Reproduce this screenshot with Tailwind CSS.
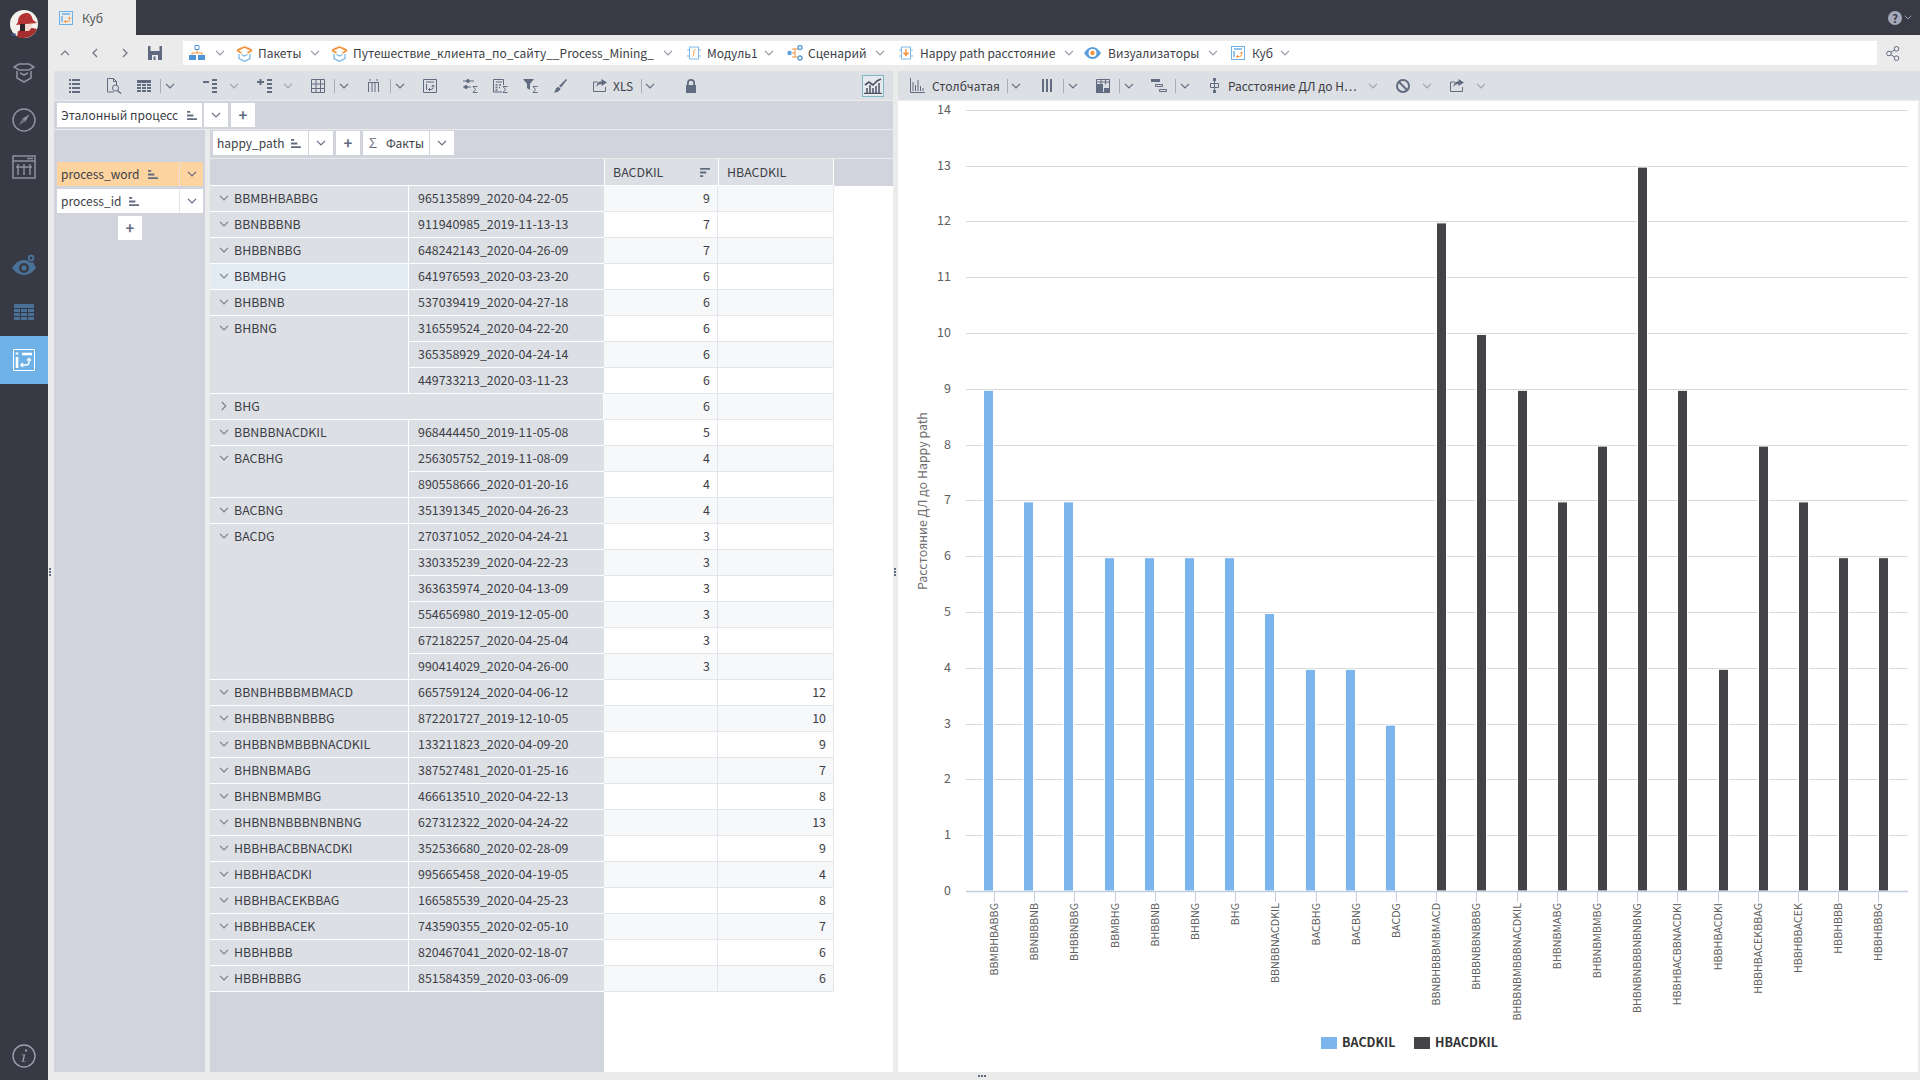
<!DOCTYPE html>
<html lang="ru">
<head>
    <meta charset="UTF-8">
    <title>Куб</title>
    <script src="https://cdn.jsdelivr.net/npm/@tailwindcss/browser@4"></script>
</head>
<body class="w-[1920px] h-[1080px] overflow-hidden flex bg-[#ebebeb] font-['Noto_Sans_CJK_SC',sans-serif] text-[12px] leading-[16px] text-[#3c3e46]">

    <!-- Icon set -->
    <svg class="hidden">
        <symbol id="chev" viewBox="0 0 10 6"><path d="M1 .8l4 4 4-4" fill="none" stroke="currentColor" stroke-width="1.200"/></symbol>
        <symbol id="sort" viewBox="0 0 11 10"><path d="M0 0h3.500v2H0zM0 4h7v2H0zM0 8h11v2H0z" fill="currentColor"/></symbol>
        <symbol id="pkg" viewBox="0 0 17 17"><path d="M1 5.500L8.500 2 16 5.500 11.500 3M1 5.500l4.500 2.500M16 5.500l-4.500 2.500M5.500 3L1 5.500" fill="none" stroke="#f5943c" stroke-width="1.600"/><path d="M3 9v4.500l5.500 2.800 5.500-2.800V9M5.500 9.500l3 1.500 3-1.500" fill="none" stroke="#7db8e8" stroke-width="1.300"/></symbol>
        <symbol id="cube" viewBox="0 0 14 14"><rect x=".5" y=".5" width="13" height="13" fill="none" stroke="#6fb1e7"/><path d="M3 3h8M3 5v6" stroke="#6fb1e7" stroke-width="1.500"/><path d="M10.500 6v2.500a2 2 0 0 1-2 2H5.500M9 7.500l1.500-1.500 1.500 1.500M7 9l-1.500 1.500L7 12" fill="none" stroke="#f5943c"/></symbol>
        <symbol id="export" viewBox="0 0 14 13"><path d="M.5 3v9.500h12V8M.5 3H5" fill="none" stroke="currentColor"/><path d="M8.500 0l5.500 3.500-5.500 3.500V5C6 5 4.500 6 3.500 8c0-3.500 2-5.500 5-5.500z" fill="currentColor"/></symbol>
        <symbol id="grid" viewBox="0 0 14 14"><path d="M.5.500h13v13H.5zM5 .5v13M9.500.5v13M.5 5h13M.5 9.500h13" fill="none" stroke="currentColor"/></symbol>
    </svg>

    <!-- Left navigation rail -->
    <aside class="w-[48px] h-full shrink-0 flex flex-col items-center bg-[#373a44]">
        <svg class="mt-[10px] w-[28px] h-[28px]" viewBox="0 0 28 28">
            <circle cx="14" cy="14" r="14" fill="#f4f1ee"/>
            <path d="M8 21l14-3 5 1a14 14 0 0 1-13 9c-3 0-5-.5-7-1z" fill="#a52f2f"/>
            <path d="M8 12C8 5 13 3 17 3c4 0 5 4 6 7l4 3-21 2z" fill="#b53232"/>
            <path d="M10 14h5v7h-5z" fill="#2e2528"/>
            <path d="M15 14h7c0 4-2 7-4 7h-3z" fill="#f3d9cd"/>
            <path d="M1 25l4-2 1 2-3 1z" fill="#3e5f8a"/>
        </svg>
        <svg class="mt-[23px] w-[22px] h-[22px] text-[#8c90a0]" viewBox="0 0 22 22" fill="none" stroke="currentColor" stroke-width="1.600"><path d="M1 6l5-3h10l5 3-5 3H6zM4 10v7l7 4 7-4v-7M7 12l4 2 4-2"/></svg>
        <svg class="mt-[25px] w-[24px] h-[24px] text-[#8c90a0]" viewBox="0 0 24 24"><circle cx="12" cy="12" r="11" fill="none" stroke="currentColor" stroke-width="1.500"/><path d="M17.500 6.500L13.500 13.500 10.500 10.500z" fill="currentColor"/><path d="M6.500 17.500L10.500 10.500 13.500 13.500z" fill="currentColor" opacity=".6"/></svg>
        <svg class="mt-[23px] w-[24px] h-[24px] text-[#8c90a0]" viewBox="0 0 24 24" fill="none" stroke="currentColor" stroke-width="1.500"><path d="M1 1h22v22H1zM1 6h22M6 9v11M12 9v11M18 9v11M4 12h16M15 3.500h6"/></svg>
        <svg class="mt-[74px] w-[24px] h-[24px] text-[#4a7198]" viewBox="0 0 24 24"><path d="M0 15c4-6 8-8 12-8 1 0 2 0 3 .5 2 1.500 4 2 6 1.500l3 6c-4 5-8 7-12 7S4 20 0 15z" fill="currentColor"/><circle cx="12" cy="15" r="5" fill="#373a44"/><circle cx="12" cy="15" r="2.500" fill="currentColor"/><circle cx="19" cy="5" r="4" fill="currentColor" stroke="#373a44"/><circle cx="19" cy="5" r="1.500" fill="#373a44"/></svg>
        <svg class="mt-[27px] w-[20px] h-[16px] text-[#4a7198]" viewBox="0 0 20 16" fill="currentColor"><path d="M0 0h20v4H0zM0 5h6v3H0zM7 5h6v3H7zM14 5h6v3h-6zM0 9h6v3H0zM7 9h6v3H7zM14 9h6v3h-6zM0 13h6v3H0zM7 13h6v3H7zM14 13h6v3h-6z"/></svg>
        <div class="mt-[16px] w-full h-[48px] flex items-center justify-center bg-[#6eb1e7]">
            <svg class="w-[22px] h-[22px] text-white" viewBox="0 0 22 22" fill="none" stroke="currentColor"><path d="M.5.500h21v21H.5z"/><path d="M9 5h10M4 3.500v2M4 8v11" stroke-width="2.600"/><path d="M16 10v3a3 3 0 0 1-3 3H8M14 11.500l2-2 2 2M10 14l-2 2 2 2" stroke-width="1.400"/></svg>
        </div>
        <svg class="mt-auto mb-[12px] w-[24px] h-[24px] text-[#9a9eae]" viewBox="0 0 24 24"><circle cx="12" cy="12" r="11" fill="none" stroke="currentColor" stroke-width="1.400"/><path d="M12.800 6.500a1.200 1.200 0 1 1 0 .1zM9.800 10.500h3.400l-1.500 6.500h1.500v.8H9.500v-.8h.8l1.300-5.700H9.800z" fill="currentColor"/></svg>
    </aside>

    <div class="flex-1 h-full flex flex-col relative">

        <!-- Window tabs -->
        <div class="h-[35px] flex items-stretch bg-[#383b45]">
            <div class="w-[88px] flex items-center bg-[#ebebeb]">
                <svg class="ml-[11px] w-[14px] h-[14px]"><use href="#cube"/></svg>
                <span class="ml-[9px] text-[#555]">Куб</span>
            </div>
            <div class="ml-auto mr-[8px] flex items-center text-[#a4a8ba]">
                <span class="w-[14px] h-[14px] rounded-full bg-[#a4a8ba] text-[#383b45] text-[11px] leading-[14px] font-bold text-center">?</span>
                <svg class="ml-[2px] w-[8px] h-[5px]"><use href="#chev"/></svg>
            </div>
        </div>

        <!-- Breadcrumbs -->
        <div class="h-[36px] flex items-center text-[#6d7280]">
            <svg class="ml-[12px] w-[10px] h-[6px] rotate-180"><use href="#chev"/></svg>
            <svg class="ml-[22px] w-[6px] h-[10px]" viewBox="0 0 6 10"><path d="M5 1L1 5l4 4" fill="none" stroke="currentColor" stroke-width="1.200"/></svg>
            <svg class="ml-[24px] w-[6px] h-[10px]" viewBox="0 0 6 10"><path d="M1 1l4 4-4 4" fill="none" stroke="currentColor" stroke-width="1.200"/></svg>
            <svg class="ml-[20px] w-[14px] h-[14px] text-[#5f6a80]" viewBox="0 0 14 14"><path d="M0 0h2.500v5h9V0H14v14H0zM4 9v5h6V9zM5.500 10.500h2V14h-2z" fill="currentColor" fill-rule="evenodd"/></svg>
            <div class="ml-[21px] w-[1694px] h-[24px] flex items-center bg-white text-[#9397a2]">
                <svg class="ml-[6px] w-[16px] h-[16px]" viewBox="0 0 16 16"><path d="M6 .5h4v4H6z" fill="none" stroke="#4d95d8"/><path d="M8 5v3M3 10V8h10v2" fill="none" stroke="#f5943c"/><path d="M0 10h7v5H0zM9 10h7v5H9z" fill="#4d95d8"/></svg>
                <svg class="ml-[10px] w-[10px] h-[6px]"><use href="#chev"/></svg>
                <svg class="ml-[11px] w-[17px] h-[17px]"><use href="#pkg"/></svg>
                <span class="ml-[5px] w-[43px] text-[#3c3e46] whitespace-nowrap">Пакеты</span>
                <svg class="ml-[9px] w-[10px] h-[6px]"><use href="#chev"/></svg>
                <svg class="ml-[11px] w-[17px] h-[17px]"><use href="#pkg"/></svg>
                <span class="ml-[5px] w-[302px] text-[#3c3e46] whitespace-nowrap">Путешествие_клиента_по_сайту__Process_Mining_</span>
                <svg class="ml-[8px] w-[10px] h-[6px]"><use href="#chev"/></svg>
                <svg class="ml-[14px] w-[14px] h-[14px]" viewBox="0 0 14 14"><path d="M2.500 1h9v12h-9zM0 4h2.500M0 10h2.500M11.500 4H14M11.500 10H14" fill="none" stroke="#7db8e8"/><path d="M8.500 3.500C7 3.500 7 5 6.800 7S6 10.500 5 10.500" fill="none" stroke="#f5943c"/></svg>
                <span class="ml-[6px] w-[50px] text-[#3c3e46] whitespace-nowrap">Модуль1</span>
                <svg class="ml-[7px] w-[10px] h-[6px]"><use href="#chev"/></svg>
                <svg class="ml-[13px] w-[16px] h-[16px]" viewBox="0 0 16 16"><path d="M5 4h6M8 4v8M5 8h3M5 12h6" fill="none" stroke="#f5943c"/><circle cx="2.500" cy="8" r="2.200" fill="#5a9edb"/><circle cx="13" cy="2.500" r="2" fill="none" stroke="#5a9edb" stroke-width="1.400"/><circle cx="13" cy="13" r="2" fill="none" stroke="#5a9edb" stroke-width="1.400"/></svg>
                <span class="ml-[5px] w-[59px] text-[#3c3e46] whitespace-nowrap">Сценарий</span>
                <svg class="ml-[8px] w-[10px] h-[6px]"><use href="#chev"/></svg>
                <svg class="ml-[14px] w-[14px] h-[14px]" viewBox="0 0 14 14"><path d="M2.500 1h9v12h-9zM0 4h2.500M0 10h2.500M11.500 4H14M11.500 10H14" fill="none" stroke="#7db8e8"/><path d="M7 3v6M4.500 6.500L7 9.500l2.500-3" fill="none" stroke="#f5943c" stroke-width="1.400"/></svg>
                <span class="ml-[7px] w-[136px] text-[#3c3e46] whitespace-nowrap">Happy path расстояние</span>
                <svg class="ml-[8px] w-[10px] h-[6px]"><use href="#chev"/></svg>
                <svg class="ml-[10px] w-[17px] h-[12px]" viewBox="0 0 17 12"><path d="M0 6c2.500-4 5.500-6 8.500-6S14.500 2 17 6c-2.500 4-5.500 6-8.500 6S2.500 10 0 6z" fill="#5a9edb"/><circle cx="8.500" cy="6" r="4" fill="#fff"/><circle cx="8.500" cy="6" r="2.200" fill="#f5943c"/></svg>
                <span class="ml-[7px] w-[92px] text-[#3c3e46] whitespace-nowrap">Визуализаторы</span>
                <svg class="ml-[8px] w-[10px] h-[6px]"><use href="#chev"/></svg>
                <svg class="ml-[13px] w-[14px] h-[14px]"><use href="#cube"/></svg>
                <span class="ml-[7px] w-[20px] text-[#3c3e46] whitespace-nowrap">Куб</span>
                <svg class="ml-[8px] w-[10px] h-[6px]"><use href="#chev"/></svg>
            </div>
            <svg class="ml-[9px] w-[14px] h-[15px] text-[#5f6a80]" viewBox="0 0 14 15" fill="none" stroke="currentColor"><circle cx="10.500" cy="2.800" r="2.300"/><circle cx="3" cy="7.500" r="2.300"/><circle cx="10.500" cy="12.200" r="2.300"/><path d="M8.500 4L5 6.300M5 8.700l3.500 2.300"/></svg>
        </div>

        <!-- Work area -->
        <div class="flex-1 flex pb-[8px]">

            <!-- Cube panel -->
            <section class="ml-[6px] w-[839px] flex flex-col">
                <div class="h-[29px] flex items-center bg-[#dcdfe4] text-[#626c80]">
                    <svg class="ml-[15px] w-[11px] h-[14px]" viewBox="0 0 11 14" fill="currentColor"><path d="M0 0h2v2H0zM3 0h8v2H3zM0 4h2v2H0zM3 4h8v2H3zM0 8h2v2H0zM3 8h8v2H3zM0 12h2v2H0zM3 12h8v2H3z"/></svg>
                    <svg class="ml-[27px] w-[15px] h-[16px]" viewBox="0 0 15 16" fill="none" stroke="currentColor"><path d="M7 14H.5V.5h6l3 3V7"/><path d="M6.500.5v3h3"/><circle cx="8.500" cy="10" r="3"/><path d="M10.500 12.500l3.500 3" stroke-width="1.500"/></svg>
                    <svg class="ml-[15px] w-[14px] h-[12px]" viewBox="0 0 14 12" fill="currentColor"><path d="M0 0h14v3H0zM0 4h4v2H0zM5 4h4v2H5zM10 4h4v2h-4zM0 7h4v2H0zM5 7h4v2H5zM10 7h4v2h-4zM0 10h4v2H0zM5 10h4v2H5zM10 10h4v2h-4z"/></svg>
                    <span class="ml-[9px] w-px h-[14px] bg-[#a8adb8]"></span>
                    <svg class="ml-[4px] w-[10px] h-[6px]"><use href="#chev"/></svg>
                    <svg class="ml-[28px] w-[14px] h-[14px]" viewBox="0 0 14 14" fill="currentColor"><path d="M9 0h5v2H9zM9 4h5v2H9zM9 8h5v2H9zM9 12h5v2H9zM0 2h6v2H0z"/></svg>
                    <svg class="ml-[12px] w-[10px] h-[6px] text-[#a0a4ae]"><use href="#chev"/></svg>
                    <svg class="ml-[18px] w-[15px] h-[14px]" viewBox="0 0 15 14" fill="currentColor"><path d="M10 0h5v2h-5zM10 4h5v2h-5zM10 8h5v2h-5zM10 12h5v2h-5zM0 2h2.500V0h2v2H7v2H4.500v2h-2V4H0z"/></svg>
                    <svg class="ml-[11px] w-[10px] h-[6px] text-[#a0a4ae]"><use href="#chev"/></svg>
                    <svg class="ml-[18px] w-[14px] h-[14px]"><use href="#grid"/></svg>
                    <span class="ml-[9px] w-px h-[14px] bg-[#a8adb8]"></span>
                    <svg class="ml-[4px] w-[10px] h-[6px]"><use href="#chev"/></svg>
                    <svg class="ml-[19px] w-[11px] h-[13px]" viewBox="0 0 11 13" fill="none" stroke="currentColor"><path d="M0 3.500h11M.5 3.500V13M10.500 3.500V13M4 3.500V13M7 3.500V13M2 0v2M9 0v2"/></svg>
                    <span class="ml-[11px] w-px h-[14px] bg-[#a8adb8]"></span>
                    <svg class="ml-[4px] w-[10px] h-[6px]"><use href="#chev"/></svg>
                    <svg class="ml-[18px] w-[14px] h-[14px]" viewBox="0 0 14 14" fill="none" stroke="currentColor"><path d="M.5.500h13v13H.5zM3 3h8M3.500 5v6M10 6v2.500a2 2 0 0 1-2 2H5.500M8.500 7.500L10 6l1.500 1.500M7 9l-1.500 1.500L7 12"/></svg>
                    <svg class="ml-[26px] w-[15px] h-[14px]" viewBox="0 0 15 14" fill="none" stroke="currentColor"><path d="M0 2h3M7 2h4M0 8h1M5 8h3"/><circle cx="5" cy="2" r="1.500" fill="currentColor"/><circle cx="3" cy="8" r="1.500" fill="currentColor"/><path d="M14.500 7.500H10l2.500 3-2.500 3h4.500"/></svg>
                    <svg class="ml-[15px] w-[15px] h-[14px]" viewBox="0 0 15 14" fill="none" stroke="currentColor"><path d="M9 13H.5V.5h10V6M3 3h6"/><path d="M2.500 6h2M6 6h2M2.500 8.500h2M6 8.500h1M2.500 11h2" stroke-width="1.400"/><path d="M14.500 7.500H10l2.500 3-2.500 3h4.500"/></svg>
                    <svg class="ml-[15px] w-[15px] h-[14px]" viewBox="0 0 15 14"><path d="M0 0h11L7 5v6L4 9V5z" fill="currentColor"/><path d="M14.500 7.500H10l2.500 3-2.500 3h4.500" fill="none" stroke="currentColor"/></svg>
                    <svg class="ml-[15px] w-[14px] h-[14px]" viewBox="0 0 14 14" fill="currentColor"><path d="M13 0l1 1-6 7.500-2-1.500zM5.500 8L7.500 9.500C7 12 4 14 0 13.500 2 13 2 12 2.500 10.500 3 9 4 8 5.500 8z"/></svg>
                    <svg class="ml-[26px] w-[14px] h-[13px]"><use href="#export"/></svg>
                    <span class="ml-[6px] w-[20px] text-[#3c3e46]">XLS</span>
                    <span class="ml-[8px] w-px h-[14px] bg-[#a8adb8]"></span>
                    <svg class="ml-[3px] w-[10px] h-[6px]"><use href="#chev"/></svg>
                    <svg class="ml-[31px] w-[10px] h-[14px]" viewBox="0 0 10 14" fill="currentColor"><path d="M0 6h1V4a4 4 0 0 1 8 0v2h1v8H0zM2.800 6h4.400V4a2.200 2.200 0 0 0-4.400 0z" fill-rule="evenodd"/></svg>
                    <span class="ml-auto mr-[9px] w-[22px] h-[22px] flex items-center justify-center border border-[#7fb6c6] bg-[#e6eaee]">
                        <svg class="w-[18px] h-[16px]" viewBox="0 0 18 16" fill="none" stroke="#4a5264"><path d="M0 15.500h18M3 15V10M6 15V7M9 15v-5M12 15V8M15 15V5" stroke-width="1.500"/><path d="M1 7l4-3 4 3 4-4 4-2" stroke-width="1.600"/></svg>
                    </span>
                </div>

                <!-- Row dimension filter -->
                <div class="h-[30px] pt-[2px] flex gap-[2px] border-t border-b border-[#ebebeb] bg-[#d1d4dc]">
                    <div class="ml-[3px] w-[145px] h-[24px] flex items-center bg-white">
                        <span class="ml-[4px] w-[126px] whitespace-nowrap">Эталонный процесс</span>
                        <svg class="w-[10px] h-[9px] text-[#626c80]"><use href="#sort"/></svg>
                    </div>
                    <div class="w-[24px] h-[24px] flex items-center justify-center bg-white text-[#626c80]"><svg class="w-[10px] h-[6px]"><use href="#chev"/></svg></div>
                    <div class="ml-[1px] w-[24px] h-[24px] flex items-center justify-center bg-white text-[#626c80] text-[15px] font-bold">+</div>
                </div>

                <div class="flex-1 flex min-h-0">
                    <!-- Rows pane -->
                    <div class="w-[151px] pt-[32px] flex flex-col items-start bg-[#d1d4dc]">
                        <div class="ml-[3px] w-[146px] h-[24px] flex bg-[#fdd3a0]">
                            <span class="w-[122px] flex items-center">
                                <span class="ml-[4px] w-[87px] whitespace-nowrap">process_word</span>
                                <svg class="w-[10px] h-[9px] text-[#626c80]"><use href="#sort"/></svg>
                            </span>
                            <span class="flex-1 flex items-center justify-center border-l border-[#e6e3dd] text-[#626c80]"><svg class="w-[10px] h-[6px]"><use href="#chev"/></svg></span>
                        </div>
                        <div class="mt-[3px] ml-[3px] w-[146px] h-[24px] flex bg-white">
                            <span class="w-[122px] flex items-center">
                                <span class="ml-[4px] w-[68px] whitespace-nowrap">process_id</span>
                                <svg class="w-[10px] h-[9px] text-[#626c80]"><use href="#sort"/></svg>
                            </span>
                            <span class="flex-1 flex items-center justify-center border-l border-[#e6e6ea] text-[#626c80]"><svg class="w-[10px] h-[6px]"><use href="#chev"/></svg></span>
                        </div>
                        <div class="mt-[3px] ml-[64px] w-[24px] h-[24px] flex items-center justify-center bg-white text-[#626c80] text-[15px] font-bold">+</div>
                    </div>

                    <!-- Pivot table -->
                    <div class="ml-[5px] w-[683px] flex flex-col bg-white">
                        <div class="h-[29px] pt-[1px] flex gap-[1px] border-b border-[#ebebeb] bg-[#d1d4dc]">
                            <div class="ml-[3px] w-[95px] h-[24px] flex items-center bg-white">
                                <span class="ml-[4px] w-[74px] whitespace-nowrap">happy_path</span>
                                <svg class="w-[10px] h-[9px] text-[#626c80]"><use href="#sort"/></svg>
                            </div>
                            <div class="w-[24px] h-[24px] flex items-center justify-center bg-white text-[#626c80]"><svg class="w-[10px] h-[6px]"><use href="#chev"/></svg></div>
                            <div class="ml-[2px] w-[24px] h-[24px] flex items-center justify-center bg-white text-[#626c80] text-[15px] font-bold">+</div>
                            <div class="ml-[2px] w-[66px] h-[24px] flex items-center bg-white">
                                <span class="ml-[4px] text-[#626c80]">∑</span>
                                <span class="ml-[7px] whitespace-nowrap">Факты</span>
                            </div>
                            <div class="w-[24px] h-[24px] flex items-center justify-center bg-white text-[#626c80]"><svg class="w-[10px] h-[6px]"><use href="#chev"/></svg></div>
                        </div>
                        <table class="w-[683px] table-fixed border-separate border-spacing-0 text-[12.4px]">
                            <colgroup><col class="w-[199px]"><col class="w-[195px]"><col class="w-[114px]"><col class="w-[116px]"><col class="w-[59px]"></colgroup>
                            <thead>
                                <tr>
                                    <th colspan="2" class="h-[27px] bg-[#d1d4dc] border-b border-white"></th>
                                    <th class="h-[27px] pl-[8px] pr-[8px] bg-[#dcdfe4] border-l border-b border-white font-normal text-left">
                                        <span class="flex items-center justify-between">BACDKIL
                                            <svg class="w-[10px] h-[9px] text-[#626c80] -scale-y-100"><use href="#sort"/></svg>
                                        </span>
                                    </th>
                                    <th class="h-[27px] pl-[8px] bg-[#dcdfe4] border-l border-r border-b border-white font-normal text-left">HBACDKIL</th>
                                    <th class="h-[27px] bg-[#d1d4dc]"></th>
                                </tr>
                            </thead>
                            <tbody id="pivotBody"></tbody>
                        </table>
                    </div>
                </div>
            </section>

            <!-- Chart panel -->
            <section class="ml-[5px] w-[1020px] flex flex-col">
                <div class="h-[29px] w-[1022px] flex items-center bg-[#dcdfe4] text-[#626c80]">
                    <svg class="ml-[12px] w-[15px] h-[15px]" viewBox="0 0 15 15" fill="none" stroke="currentColor"><path d="M.5 0v14.500H15M3 13V4M5.500 13V7M8 13V2M10.500 13V8M13 13v-3"/></svg>
                    <span class="ml-[7px] w-[66px] text-[#3c3e46] whitespace-nowrap">Столбчатая</span>
                    <span class="ml-[9px] w-px h-[14px] bg-[#a8adb8]"></span>
                    <svg class="ml-[3px] w-[10px] h-[6px]"><use href="#chev"/></svg>
                    <svg class="ml-[21px] w-[10px] h-[13px]" viewBox="0 0 10 13" fill="currentColor"><path d="M0 0h2v13H0zM4 0h2v13H4zM8 0h2v13H8z"/></svg>
                    <span class="ml-[11px] w-px h-[14px] bg-[#a8adb8]"></span>
                    <svg class="ml-[4px] w-[10px] h-[6px]"><use href="#chev"/></svg>
                    <svg class="ml-[18px] w-[14px] h-[14px]" viewBox="0 0 14 14"><path d="M.5.500h13v13H.5zM5 .5v5M9.500.5v5M.5 3h13" fill="none" stroke="currentColor"/><path d="M0 5h7v9H0zM8 9h6v5H8z" fill="currentColor"/></svg>
                    <span class="ml-[9px] w-px h-[14px] bg-[#a8adb8]"></span>
                    <svg class="ml-[4px] w-[10px] h-[6px]"><use href="#chev"/></svg>
                    <svg class="ml-[17px] w-[16px] h-[13px]" viewBox="0 0 16 13"><path d="M0 0h9v3H0z" fill="currentColor"/><path d="M4.500 5.500h7v2h-7zM8.500 10.500h7v2h-7z" fill="none" stroke="currentColor"/></svg>
                    <span class="ml-[8px] w-px h-[14px] bg-[#a8adb8]"></span>
                    <svg class="ml-[4px] w-[10px] h-[6px]"><use href="#chev"/></svg>
                    <svg class="ml-[20px] w-[9px] h-[15px]" viewBox="0 0 9 15"><path d="M3 0h3v3H3zM3 12h3v3H3z" fill="currentColor"/><path d="M4.500 3v9M.5 5.500h8v4h-8z" fill="none" stroke="currentColor"/></svg>
                    <span class="ml-[9px] w-[130px] text-[#3c3e46] whitespace-nowrap">Расстояние ДЛ до Н…</span>
                    <svg class="ml-[10px] w-[10px] h-[6px] text-[#a0a4ae]"><use href="#chev"/></svg>
                    <svg class="ml-[18px] w-[14px] h-[14px]" viewBox="0 0 14 14" fill="none" stroke="currentColor" stroke-width="2"><circle cx="7" cy="7" r="6"/><path d="M3 3l8 8"/></svg>
                    <svg class="ml-[12px] w-[10px] h-[6px] text-[#a0a4ae]"><use href="#chev"/></svg>
                    <svg class="ml-[18px] w-[14px] h-[13px]"><use href="#export"/></svg>
                    <svg class="ml-[12px] w-[10px] h-[6px] text-[#a0a4ae]"><use href="#chev"/></svg>
                </div>
                <div class="flex-1 border-t border-[#ebebeb] bg-white">
                    <svg id="chart" class="block w-[1020px] h-[971px]" viewBox="898 101 1020 971"></svg>
                </div>
            </section>
        </div>

        <!-- Splitter grips -->
        <div class="absolute left-[1px] top-[568px] flex flex-col gap-[1px]">
            <span class="w-[2px] h-[2px] bg-[#626c80]"></span><span class="w-[2px] h-[2px] bg-[#626c80]"></span><span class="w-[2px] h-[2px] bg-[#626c80]"></span>
        </div>
        <div class="absolute left-[846px] top-[568px] flex flex-col gap-[1px]">
            <span class="w-[2px] h-[2px] bg-[#626c80]"></span><span class="w-[2px] h-[2px] bg-[#626c80]"></span><span class="w-[2px] h-[2px] bg-[#626c80]"></span>
        </div>
        <div class="absolute left-[930px] top-[1075px] flex gap-[1px]">
            <span class="w-[2px] h-[2px] bg-[#626c80]"></span><span class="w-[2px] h-[2px] bg-[#626c80]"></span><span class="w-[2px] h-[2px] bg-[#626c80]"></span>
        </div>
    </div>

    <script>
        // word, process ids, BACDKIL value, HBACDKIL value
        const groups = [
            ['BBMBHBABBG', ['965135899_2020-04-22-05'], 9, ''],
            ['BBNBBBNB', ['911940985_2019-11-13-13'], 7, ''],
            ['BHBBNBBG', ['648242143_2020-04-26-09'], 7, ''],
            ['BBMBHG', ['641976593_2020-03-23-20'], 6, ''],
            ['BHBBNB', ['537039419_2020-04-27-18'], 6, ''],
            ['BHBNG', ['316559524_2020-04-22-20', '365358929_2020-04-24-14', '449733213_2020-03-11-23'], 6, ''],
            ['BHG', [], 6, ''],
            ['BBNBBNACDKIL', ['968444450_2019-11-05-08'], 5, ''],
            ['BACBHG', ['256305752_2019-11-08-09', '890558666_2020-01-20-16'], 4, ''],
            ['BACBNG', ['351391345_2020-04-26-23'], 4, ''],
            ['BACDG', ['270371052_2020-04-24-21', '330335239_2020-04-22-23', '363635974_2020-04-13-09', '554656980_2019-12-05-00', '672182257_2020-04-25-04', '990414029_2020-04-26-00'], 3, ''],
            ['BBNBHBBBMBMACD', ['665759124_2020-04-06-12'], '', 12],
            ['BHBBNBBNBBBG', ['872201727_2019-12-10-05'], '', 10],
            ['BHBBNBMBBBNACDKIL', ['133211823_2020-04-09-20'], '', 9],
            ['BHBNBMABG', ['387527481_2020-01-25-16'], '', 7],
            ['BHBNBMBMBG', ['466613510_2020-04-22-13'], '', 8],
            ['BHBNBNBBBNBNBNG', ['627312322_2020-04-24-22'], '', 13],
            ['HBBHBACBBNACDKI', ['352536680_2020-02-28-09'], '', 9],
            ['HBBHBACDKI', ['995665458_2020-04-19-05'], '', 4],
            ['HBBHBACEKBBAG', ['166585539_2020-04-25-23'], '', 8],
            ['HBBHBBACEK', ['743590355_2020-02-05-10'], '', 7],
            ['HBBHBBB', ['820467041_2020-02-18-07'], '', 6],
            ['HBBHBBBG', ['851584359_2020-03-06-09'], '', 6]
        ];

        const wordCell = 'h-[26px] align-top pt-[4px] pl-[9px] border-b border-r border-white whitespace-nowrap';
        const idCell = 'h-[26px] pb-[2px] pl-[9px] bg-[#dcdfe4] border-b border-white whitespace-nowrap';
        const valCell = 'h-[26px] pb-[2px] pr-[7px] text-right border-b border-r border-[#e3e5ea]';

        let html = '';
        let rowNo = 0;
        groups.forEach(([word, ids, a, b]) => {
            const rows = Math.max(ids.length, 1);
            for (let i = 0; i < rows; i++) {
                const stripe = rowNo % 2 === 0 ? 'bg-[#f7f8fa]' : 'bg-white';
                let tr = '<tr>';
                if (i === 0) {
                    const bg = word === 'BBMBHG' ? 'bg-[#e2eaf2]' : 'bg-[#dcdfe4]';
                    const arrow = ids.length
                        ? '<svg class="inline-block mr-[5px] w-[10px] h-[6px] align-[2px] text-[#7b8190]"><use href="#chev"/></svg>'
                        : '<svg class="inline-block mr-[5px] w-[10px] h-[6px] align-[2px] -rotate-90 text-[#7b8190]"><use href="#chev"/></svg>';
                    const span = ids.length ? `rowspan="${rows}"` : 'colspan="2"';
                    tr += `<td ${span} class="${wordCell} ${bg}">${arrow}${word}</td>`;
                }
                if (ids.length) tr += `<td class="${idCell}">${ids[i]}</td>`;
                tr += `<td class="${valCell} ${stripe}">${a}</td><td class="${valCell} ${stripe}">${b}</td></tr>`;
                html += tr;
                rowNo++;
            }
        });
        html += '<tr><td colspan="2" class="h-[80px] bg-[#d1d4dc]"></td><td colspan="3"></td></tr>';
        document.getElementById('pivotBody').innerHTML = html;

        // Column chart
        const zeroY = 891, stepY = 55.8, tickX = i => 994 + 40.2 * i;
        let svg = '';
        for (let v = 1; v <= 14; v++) {
            const y = Math.round(zeroY - v * stepY) + 0.5;
            svg += `<path d="M966 ${y}H1908" stroke="#d8d8d8"/>`;
        }
        for (let v = 0; v <= 14; v++) {
            svg += `<text x="951" y="${zeroY - v * stepY + 4}" text-anchor="end" font-size="12.500" fill="#606060">${v}</text>`;
        }
        svg += `<text transform="translate(927 501) rotate(-90)" text-anchor="middle" font-size="12.400" fill="#707070">Расстояние ДЛ до Happy path</text>`;
        groups.forEach(([word, , a, b], i) => {
            const x = Math.round(tickX(i));
            const val = a || b;
            const left = a ? x - 10.5 : x + 0.5;
            const top = zeroY - val * stepY + 1.5;
            svg += `<rect x="${left}" y="${top}" width="10" height="${zeroY - top}" fill="${a ? '#7cb5ec' : '#434348'}" stroke="#fff"/>`;
            svg += `<path d="M${x}.5 892V902" stroke="#c0d0e0"/>`;
            svg += `<text transform="translate(${x + 4} 903) rotate(-90)" text-anchor="end" font-size="10.700" fill="#606060">${word}</text>`;
        });
        svg += `<path d="M966 891.500H1908" stroke="#c0d0e0" stroke-width="1.500"/>`;
        svg += `<rect x="1321" y="1037" width="16" height="12" fill="#7cb5ec"/><text x="1342" y="1047" font-size="12.500" font-weight="700" fill="#333">BACDKIL</text>`;
        svg += `<rect x="1414" y="1037" width="16" height="12" fill="#434348"/><text x="1435" y="1047" font-size="12.500" font-weight="700" fill="#333">HBACDKIL</text>`;
        document.getElementById('chart').innerHTML = svg;
    </script>
</body>
</html>
